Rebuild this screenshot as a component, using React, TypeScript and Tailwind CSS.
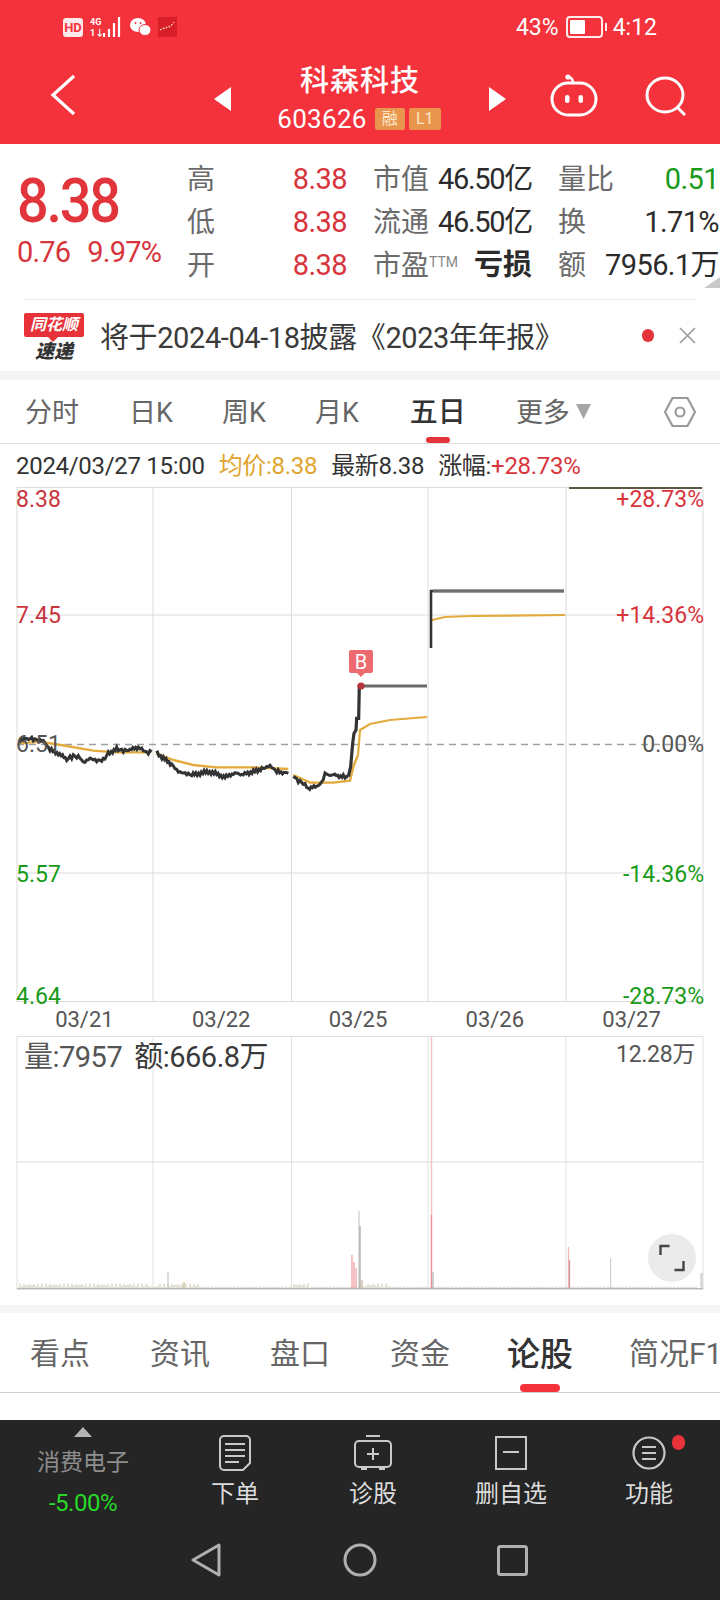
import { Fragment } from "react"

const font = { fontFamily: '"Roboto", "Noto Sans CJK SC", sans-serif' }

// 锯齿化折线,模拟分时价格的小波动
function jag(points: number[][], amp = 1.3) {
  const out: string[] = []
  for (let i = 0; i < points.length - 1; i++) {
    const [x1, y1] = points[i]
    const [x2, y2] = points[i + 1]
    const steps = Math.max(1, Math.round((x2 - x1) / 1.5))
    for (let s = 0; s < steps; s++) {
      const x = x1 + ((x2 - x1) * s) / steps
      const y = y1 + ((y2 - y1) * s) / steps
      const n = Math.sin(x * 2.3) * amp + Math.sin(x * 5.1) * amp * 0.6
      out.push(`${x.toFixed(1)},${(y + n).toFixed(1)}`)
    }
  }
  const last = points[points.length - 1]
  out.push(`${last[0]},${last[1]}`)
  return out.join(" ")
}

function plain(points: number[][]) {
  return points.map((p) => p.join(",")).join(" ")
}

const zoom = (pts: number[][]) => pts.map(([x, y]) => [x / 3, 630 + y / 3])

const black1 = zoom([[60,330],[90,325],[110,330],[130,332],[150,360],[175,370],[200,388],[220,378],[240,382],[250,398],[270,385],[290,392],[310,390],[325,370],[350,357],[370,362],[390,360],[415,352],[430,360],[440,368],[455,365]])
const black2 = zoom([[468,368],[490,385],[515,403],[535,425],[555,430],[575,435],[600,430],[625,425],[650,432],[675,442],[700,430],[730,433],[760,425],[790,415],[810,407],[830,425],[865,430]])
const black3 = zoom([[880,435],[890,450],[910,460],[925,475],[950,470],[965,458],[975,432],[1000,435],[1030,440],[1045,440]])
const black4 = zoom([[1045,440],[1052,410],[1058,340],[1062,310],[1068,300],[1070,265],[1076,265],[1078,165]])
const gold1 = zoom([[60,340],[120,335],[200,348],[280,362],[350,367],[450,367]])
const gold2 = zoom([[468,370],[520,390],[580,405],[650,412],[760,412],[865,417]])
const gold3 = zoom([[880,435],[930,458],[1000,458],[1050,452],[1060,410],[1074,375]])
const gold4 = [[358,755],[360,730],[370,724],[390,720],[427,717]]
const gold5 = [[432,620],[445,617],[470,616],[565,615]]

const gridX = [153, 291.5, 428, 566]

const volBars: [number, number, string][] = [
  [352, 1255, "#f29a9f"], [354, 1262, "#f29a9f"], [356, 1268, "#e6a0a0"], [359, 1211, "#c9c9c9"], [360, 1226, "#a8a29a"],
  [362, 1280, "#bdb38c"], [431.5, 1215, "#f08a8f"], [433, 1272, "#b5b5b5"], [568.5, 1247, "#f5b5b8"], [569.5, 1260, "#c99"],
  [610.6, 1258, "#cfcfcf"], [701, 1273, "#cfcfcf"], [702, 1273, "#cfcfcf"], [168, 1272, "#c8c8b8"], [184, 1282, "#c2b98a"],
]
// 底部细碎成交量,每天开盘附近略高
const smallVol = Array.from({ length: 340 }, (_, i) => {
  const x = 18 + i * 2
  const busy = x < 150 || (x > 156 && x < 200) || (x > 293 && x < 312) || (x > 365 && x < 390)
  const h = 1.5 + (busy ? Math.abs(Math.sin(i * 1.7) * 4) : Math.abs(Math.sin(i * 1.7)))
  return [x, h]
})

function StatusIcons() {
  return (
    <div className="flex items-center gap-[7px]">
      <span className="w-[20px] h-[19px] bg-[#fde9ea] rounded-[3px] text-[#f4323c] text-[13px] font-bold leading-[19px] text-center">HD</span>
      <svg width="33" height="22" viewBox="0 0 33 22">
        <text x="0" y="9" fontSize="9" fill="#fff" fontWeight="700">4G</text>
        <text x="0" y="20" fontSize="9" fill="#fff" fontWeight="700">1↓</text>
        <path d="M14 21v-4M19 21v-8M24 21v-14M29 21V1" stroke="#fff" strokeWidth="2.2" />
      </svg>
      <svg width="21" height="22" viewBox="0 0 21 22">
        <ellipse cx="8" cy="9" rx="8" ry="7" fill="#fff" />
        <ellipse cx="15" cy="14" rx="6" ry="5.5" fill="#fff" stroke="#f4323c" />
        <circle cx="5.5" cy="7" r="1" fill="#f4323c" />
        <circle cx="10.5" cy="7" r="1" fill="#f4323c" />
      </svg>
      <svg width="19" height="20" viewBox="0 0 19 20">
        <rect width="19" height="20" fill="#d81e28" />
        <path d="M2 13l3-2 2 1 3-3 2 1 4-5" stroke="#ffd5a0" strokeWidth="1.2" strokeDasharray="2 1.5" fill="none" />
      </svg>
    </div>
  )
}

function StatusRight() {
  return (
    <div className="flex items-center text-white text-[23px] leading-none">
      <span>43%</span>
      <span className="ml-[7px] w-[37px] h-[22px] border-2 border-white/90 rounded-[4px] p-[2px] flex">
        <span className="w-[15px] bg-white rounded-[1px]" />
      </span>
      <span className="ml-[2px] w-[2px] h-[8px] bg-white/90" />
      <span className="ml-[6px]">4:12</span>
    </div>
  )
}

function Cell({ label, value, valueClass = "text-[#2b2b2b] tracking-[-0.6px]", sup }: { label: string; value: string; valueClass?: string; sup?: boolean }) {
  return (
    <div className="flex items-center justify-between whitespace-nowrap">
      <span className="text-[28px] leading-none text-[#6a6a6a] flex items-start">
        {label}
        {sup && <span className="text-[14px] leading-none mt-[3px] text-[#888]">TTM</span>}
      </span>
      <span className={`text-[29px] leading-none ${valueClass}`}>{value}</span>
    </div>
  )
}

const red = "text-[#d8343c] tracking-[-0.6px]"
const tight = "text-[#2b2b2b] tracking-[-1.3px]"

const infoRows = [
  [{ label: "高", value: "8.38", valueClass: red }, { label: "市值", value: "46.50亿", valueClass: tight }, { label: "量比", value: "0.51", valueClass: "text-[#189a18] tracking-[-0.6px]" }],
  [{ label: "低", value: "8.38", valueClass: red }, { label: "流通", value: "46.50亿", valueClass: tight }, { label: "换", value: "1.71%" }],
  [{ label: "开", value: "8.38", valueClass: red }, { label: "市盈", value: "亏损", sup: true, valueClass: "text-[#2b2b2b] font-bold" }, { label: "额", value: "7956.1万" }],
]

function NavItem({ label, children, dot }: { label: string; children: React.ReactNode; dot?: boolean }) {
  return (
    <div className="relative w-[138px] flex flex-col items-center pt-[14px]">
      <div className="h-[38px] flex items-center justify-center">{children}</div>
      <span className="mt-[7px] text-[24px] leading-[30px] text-[#dcdcdc]">{label}</span>
      {dot && <span className="absolute left-[92px] top-[15px] w-[13px] h-[15px] rounded-full bg-[#e8333a]" />}
    </div>
  )
}

export default function App() {
  return (
    <div className="w-[720px] h-[1600px] flex flex-col bg-white overflow-hidden" style={font}>
      {/* 顶部红色标题栏 */}
      <header className="h-[144px] shrink-0 bg-[#f4323c] flex flex-col">
        <div className="h-[52px] flex items-center justify-between pl-[63px] pr-[63px] pt-[2px]">
          <StatusIcons />
          <StatusRight />
        </div>
        <div className="flex-1 relative flex">
          <div className="w-[176px] pl-[50px] pt-[22px]">
            <svg width="26" height="42" viewBox="0 0 26 42" fill="none">
              <path d="M24 2L3 21l21 19" stroke="#fff" strokeWidth="3.2" />
            </svg>
          </div>
          <div className="flex-1 flex items-center justify-between">
            <svg className="ml-[38px] mt-[2px]" width="17" height="24" viewBox="0 0 17 24"><path d="M17 0v24L0 12z" fill="#fff" /></svg>
            <div className="flex flex-col items-center">
              <span className="text-[29px] leading-[36px] font-medium text-white tracking-[1px] -mt-[2px]">科森科技</span>
              <div className="flex items-center mt-[7px] ml-[-2px]">
                <span className="text-[26px] leading-[26px] text-white tracking-[0.3px]">603626</span>
                <span className="ml-[8px] w-[30px] h-[22px] bg-[#e8964e] rounded-[2px] text-[16px] leading-[22px] text-center text-[#fde6c8]">融</span>
                <span className="ml-[4px] w-[32px] h-[22px] bg-[#e8964e] rounded-[2px] text-[16px] leading-[22px] text-center text-[#fde6c8]">L1</span>
              </div>
            </div>
            <svg className="mr-[0px] mt-[2px]" width="17" height="24" viewBox="0 0 17 24"><path d="M0 0v24l17-12z" fill="#fff" /></svg>
          </div>
          <div className="w-[214px] flex pl-[44px] pt-[22px]">
            <svg width="48" height="44" viewBox="0 0 48 44" fill="none" stroke="#fff" strokeWidth="3">
              <rect x="2" y="9" width="44" height="32" rx="16" />
              <path d="M23 9c0-3-1-5-4-6" strokeWidth="2.4" />
              <circle cx="18" cy="3" r="2.6" fill="#fff" stroke="none" />
              <rect x="15" y="21" width="4.5" height="8" rx="2.2" fill="#fff" stroke="none" />
              <rect x="28.5" y="21" width="4.5" height="8" rx="2.2" fill="#fff" stroke="none" />
            </svg>
            <svg className="ml-[47px] mt-[2px]" width="42" height="40" viewBox="0 0 42 40" fill="none" stroke="#fff" strokeWidth="3">
              <ellipse cx="20" cy="19" rx="18" ry="17" />
              <path d="M32 31l8 8" />
            </svg>
          </div>
        </div>
      </header>

      {/* 行情信息 */}
      <section className="h-[155px] shrink-0 relative flex pt-[13px]">
        <div className="w-[187px] shrink-0 pl-[17px] flex flex-col">
          <span className="mt-[11px] text-[62px] leading-[66px] font-medium text-[#e2353b] tracking-[-2.5px] origin-left scale-x-[0.9]">8.38</span>
          <div className="flex text-[29px] leading-[30px] text-[#d8343c] mt-[3px] tracking-[-0.8px] whitespace-nowrap">
            <span>0.76</span>
            <span className="ml-[17px]">9.97%</span>
          </div>
        </div>
        <div className="grid grid-cols-[160px_159px_161px] gap-x-[26px] auto-rows-[43px] w-[533px] h-[129px] items-center mt-[1px]">
          {infoRows.map((row, r) => (
            <Fragment key={r}>
              {row.map((c) => <Cell key={c.label} {...c} />)}
            </Fragment>
          ))}
        </div>
        <svg className="absolute right-0 bottom-[11px]" width="16" height="11" viewBox="0 0 16 11"><path d="M16 0v11H0z" fill="#c9c9c9" /></svg>
      </section>

      {/* 速递 */}
      <section className="h-[72px] shrink-0 mx-[24px] border-t border-[#ececec] flex items-center">
        <div className="w-[60px] h-[50px] flex flex-col items-center mt-[4px]">
          <span className="relative w-[60px] h-[24px] bg-[#e63238] rounded-[2px] text-white text-[16px] leading-[24px] font-bold italic text-center">
            同花顺
            <span className="absolute left-[24px] top-[24px] w-0 h-0 border-x-[5px] border-x-transparent border-t-[5px] border-t-[#e63238]" />
          </span>
          <span className="mt-[3px] text-[19px] leading-[23px] font-black italic text-[#333]">速递</span>
        </div>
        <span className="ml-[16px] mt-[5px] text-[29px] leading-none text-[#3a3a3a] tracking-[-0.4px] whitespace-nowrap">将于2024-04-18披露《2023年年报》</span>
        <span className="ml-auto w-[12px] h-[13px] rounded-full bg-[#e4333a]" />
        <svg className="ml-[25px]" width="17" height="17" viewBox="0 0 17 17" stroke="#9a9a9a" strokeWidth="1.6"><path d="M1 1l15 15M16 1L1 16" /></svg>
      </section>
      <div className="h-[9px] shrink-0 bg-[#f4f4f4]" />

      {/* 周期切换 */}
      <nav className="h-[64px] shrink-0 relative border-b border-[#dedede] flex items-center text-[27px] leading-none text-[#666] whitespace-nowrap pt-[3px]">
        <span className="ml-[25px]">分时</span>
        <span className="ml-[50px]">日K</span>
        <span className="ml-[49px]">周K</span>
        <span className="ml-[49px]">月K</span>
        <span className="ml-[51px] text-[28px] font-medium text-[#333]">五日</span>
        <span className="ml-[50px]">更多</span>
        <svg className="ml-[6px] mb-[4px]" width="15" height="15" viewBox="0 0 15 15"><path d="M0 0h15L7.5 15z" fill="#a5a5a5" /></svg>
        <svg className="ml-[72px] -mt-[3px]" width="34" height="32" viewBox="0 0 34 32" fill="none" stroke="#9a9a9a" strokeWidth="2.2">
          <path d="M9.5 2h15L32 16l-7.5 14h-15L2 16z" />
          <circle cx="17" cy="16" r="4.5" />
        </svg>
        <span className="absolute left-[426px] bottom-[0px] w-[24px] h-[6px] rounded-full bg-[#e4333a]" />
      </nav>

      {/* 分时信息行 */}
      <div className="h-[43px] shrink-0 pl-[16px] flex items-center text-[24px] leading-none text-[#333] whitespace-nowrap tracking-[-0.3px]">
        <span>2024/03/27 15:00</span>
        <span className="ml-[14px] text-[#e0a52e]">均价:8.38</span>
        <span className="ml-[14px]">最新8.38</span>
        <span className="ml-[14px]">涨幅:</span>
        <span className="text-[#d8343c]">+28.73%</span>
      </div>

      {/* 主图 */}
      <div className="relative h-[515px] shrink-0 mx-[16px] w-[688px]">
        <svg className="absolute inset-0" width="688" height="515" viewBox="16 487 688 515" fill="none">
          <rect x="17" y="487.5" width="686" height="514" stroke="#dcdcdc" />
          {gridX.map((x) => <path key={x} d={`M${x} 487v515`} stroke="#dcdcdc" />)}
          <path d="M17 615h686M17 873h686" stroke="#dcdcdc" />
          <path d="M17 744.5h686" stroke="#a0a0a0" strokeWidth="1.4" strokeDasharray="7 5" />
          <polyline points={plain(gold1)} stroke="#e3ab3d" strokeWidth="2.4" />
          <polyline points={plain(gold2)} stroke="#e3ab3d" strokeWidth="2.4" />
          <polyline points={plain(gold3)} stroke="#e3ab3d" strokeWidth="2.4" />
          <polyline points={plain(gold4)} stroke="#e3ab3d" strokeWidth="2.2" />
          <polyline points={plain(gold5)} stroke="#e3ab3d" strokeWidth="2.2" />
          <polyline points={jag(black1)} stroke="#333" strokeWidth="3" />
          <polyline points={jag(black2)} stroke="#333" strokeWidth="3" />
          <polyline points={jag(black3)} stroke="#333" strokeWidth="3" />
          <polyline points={plain(black4)} stroke="#333" strokeWidth="3.2" />
          <path d="M359 686h68" stroke="#6a6a6a" strokeWidth="3" />
          <path d="M431 648v-57h133" stroke="#333" strokeWidth="2.6" />
          <path d="M433 591h131" stroke="#6f6f6f" strokeWidth="3" />
          <path d="M569 487.5h133" stroke="#5e5544" strokeWidth="3" />
          <circle cx="361" cy="686" r="3.6" fill="#b5343c" />
          <path d="M349 652a2 2 0 0 1 2-2h20a2 2 0 0 1 2 2v19a2 2 0 0 1-2 2h-6l-4 4-4-4h-6a2 2 0 0 1-2-2z" fill="#ec6a70" />
        </svg>
        <span className="absolute left-[333px] top-[163px] w-[24px] text-center text-white text-[20px] leading-[24px]">B</span>
        <span className="absolute left-0 top-[1px] text-[23px] leading-[24px] text-[#c9353d]">8.38</span>
        <span className="absolute left-0 top-[117px] text-[23px] leading-[24px] text-[#c9353d]">7.45</span>
        <span className="absolute left-0 top-[246px] text-[23px] leading-[24px] text-[#555]">6.51</span>
        <span className="absolute left-0 top-[376px] text-[23px] leading-[24px] text-[#189a18]">5.57</span>
        <span className="absolute left-0 top-[498px] text-[23px] leading-[24px] text-[#189a18]">4.64</span>
        <span className="absolute right-0 top-[1px] text-[23px] leading-[24px] text-[#d8343c]">+28.73%</span>
        <span className="absolute right-0 top-[117px] text-[23px] leading-[24px] text-[#d8343c]">+14.36%</span>
        <span className="absolute right-0 top-[246px] text-[23px] leading-[24px] text-[#555]">0.00%</span>
        <span className="absolute right-0 top-[376px] text-[23px] leading-[24px] text-[#189a18]">-14.36%</span>
        <span className="absolute right-0 top-[498px] text-[23px] leading-[24px] text-[#189a18]">-28.73%</span>
      </div>

      {/* 日期 */}
      <div className="h-[34px] shrink-0 ml-[16px] w-[684px] grid grid-cols-5 items-center text-center text-[22px] leading-none text-[#555] pt-[2px]">
        <span>03/21</span>
        <span>03/22</span>
        <span>03/25</span>
        <span>03/26</span>
        <span>03/27</span>
      </div>

      {/* 成交量 */}
      <div className="relative h-[254px] shrink-0 mx-[16px] w-[688px]">
        <svg className="absolute inset-0" width="688" height="254" viewBox="16 1036 688 254" fill="none">
          <rect x="17" y="1036.5" width="686" height="253" stroke="#e0e0e0" />
          {gridX.map((x) => <path key={x} d={`M${x} 1036v253`} stroke="#e2e2e2" />)}
          <path d="M17 1162h686" stroke="#dcdcdc" />
          <path d="M431.5 1036v253" stroke="#f6c3c6" strokeWidth="1.5" />
          {smallVol.map(([x, h]) => <path key={x} d={`M${x} 1289v-${h}`} stroke="#c8c4b2" />)}
          {volBars.map(([x, top, c]) => <path key={`${x}-${top}`} d={`M${x} 1289V${top}`} stroke={c} strokeWidth="1.2" />)}
          <path d="M17 1288.5h686" stroke="#b9b7b0" />
        </svg>
        <div className="absolute left-[8px] top-[6px] flex text-[29px] leading-[30px] text-[#555] tracking-[-0.5px] whitespace-nowrap">
          <span>量:7957</span>
          <span className="ml-[12px] text-[#3a3a3a]">额:666.8万</span>
        </div>
        <span className="absolute right-[9px] top-[6px] text-[23px] leading-[26px] text-[#555] tracking-[-0.3px]">12.28万</span>
        <div className="absolute right-[8px] top-[198px] w-[48px] h-[48px] rounded-full bg-[#ebebeb] flex items-center justify-center">
          <svg width="26" height="28" viewBox="0 0 26 28" fill="none" stroke="#444" strokeWidth="2.4">
            <path d="M1.5 11V2h9M24.5 17v9h-9" />
          </svg>
        </div>
      </div>

      <div className="h-[15px] shrink-0" />
      <div className="h-[8px] shrink-0 bg-[#f4f4f4]" />

      {/* 资讯标签 */}
      <nav className="h-[80px] shrink-0 relative border-b border-[#cfcfcf] flex items-center text-[30px] leading-none text-[#666] whitespace-nowrap pt-[3px]">
        <span className="ml-[30px]">看点</span>
        <span className="ml-[60px]">资讯</span>
        <span className="ml-[60px]">盘口</span>
        <span className="ml-[60px]">资金</span>
        <span className="ml-[57px] text-[33px] font-medium text-[#333]">论股</span>
        <span className="ml-[56px]">简况F1</span>
        <span className="absolute left-[520px] bottom-0 w-[40px] h-[8px] rounded-full bg-[#f4323c]" />
      </nav>
      <div className="h-[27px] shrink-0" />

      {/* 底部工具栏 */}
      <footer className="flex-1 bg-[#252525] flex flex-col">
        <div className="h-[100px] flex">
          <div className="w-[166px] flex flex-col items-center pt-[7px]">
            <svg width="18" height="10" viewBox="0 0 18 10"><path d="M9 0l9 10H0z" fill="#b5b5b5" /></svg>
            <span className="mt-[11px] text-[23px] leading-[30px] text-[#8e8e8e]">消费电子</span>
            <span className="mt-[11px] text-[24px] leading-[28px] text-[#26d926] tracking-[-0.5px]">-5.00%</span>
          </div>
          <NavItem label="下单">
            <svg width="32" height="36" viewBox="0 0 32 36" fill="none" stroke="#c9c9c9" strokeWidth="2">
              <path d="M5 1h22a4 4 0 0 1 4 4v23l-7 7H5a4 4 0 0 1-4-4V5a4 4 0 0 1 4-4z" />
              <path d="M6 9h20M6 15h20M6 21h20M6 27h14" />
            </svg>
          </NavItem>
          <NavItem label="诊股">
            <svg width="38" height="36" viewBox="0 0 38 36" fill="none" stroke="#c9c9c9" strokeWidth="2">
              <rect x="1" y="6" width="36" height="26" rx="4" />
              <path d="M12 1h14M7 34h6M25 34h6M19 13v12M13 19h12" />
            </svg>
          </NavItem>
          <NavItem label="删自选">
            <svg width="32" height="34" viewBox="0 0 32 34" fill="none" stroke="#c9c9c9" strokeWidth="2">
              <rect x="1" y="1" width="30" height="32" />
              <path d="M8 16h16" />
            </svg>
          </NavItem>
          <NavItem label="功能" dot>
            <svg width="34" height="34" viewBox="0 0 34 34" fill="none" stroke="#c9c9c9" strokeWidth="2.2">
              <ellipse cx="17" cy="17" rx="15.5" ry="15.5" />
              <path d="M10 11h14M10 17h14M10 23h14" />
            </svg>
          </NavItem>
        </div>
        <div className="flex-1 relative flex items-center">
          <svg className="ml-[191px]" width="30" height="34" viewBox="0 0 30 34" fill="none" stroke="#b0b0b0" strokeWidth="3" strokeLinejoin="round"><path d="M28 2v30L2 17z" /></svg>
          <svg className="ml-[122px]" width="34" height="34" viewBox="0 0 34 34" fill="none" stroke="#b0b0b0" strokeWidth="3"><circle cx="17" cy="17" r="15" /></svg>
          <svg className="ml-[120px]" width="31" height="31" viewBox="0 0 31 31" fill="none" stroke="#b0b0b0" strokeWidth="3"><rect x="1.5" y="1.5" width="28" height="28" rx="2" /></svg>
        </div>
      </footer>
    </div>
  )
}
